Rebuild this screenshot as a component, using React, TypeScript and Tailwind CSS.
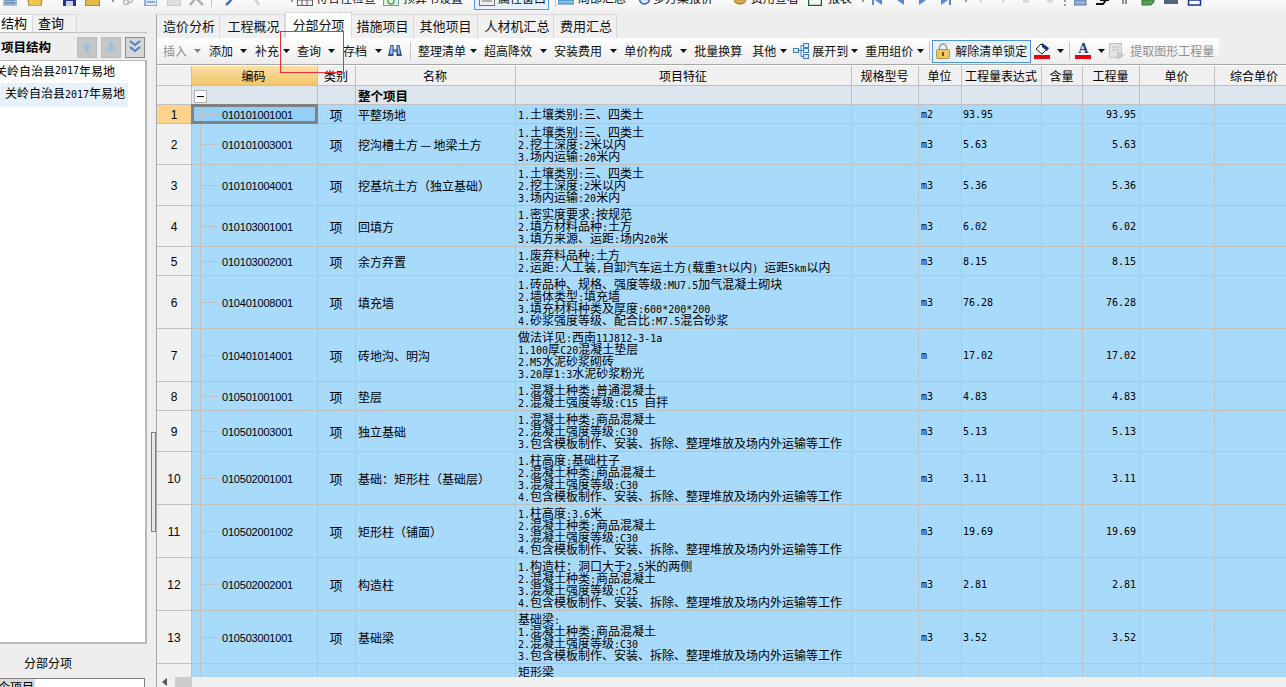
import React from 'react';

interface BillRow {
  no: number;
  code: string;
  name: string;
  unit: string;
  qty: string;
  lines: string[];
}

const concrete = (a: string, grade: string) => [a, '2.混凝土种类:商品混凝土', `3.混凝土强度等级:${grade}`, '4.包含模板制作、安装、拆除、整理堆放及场内外运输等工作'];
const soil = ['1.土壤类别:三、四类土', '2.挖土深度:2米以内', '3.场内运输:20米内'];

const rows: BillRow[] = [
  { no: 1, code: '010101001001', name: '平整场地', unit: 'm2', qty: '93.95', lines: ['1.土壤类别:三、四类土'] },
  { no: 2, code: '010101003001', name: '挖沟槽土方\u2009—\u2009地梁土方', unit: 'm3', qty: '5.63', lines: soil },
  { no: 3, code: '010101004001', name: '挖基坑土方（独立基础）', unit: 'm3', qty: '5.36', lines: soil },
  { no: 4, code: '010103001001', name: '回填方', unit: 'm3', qty: '6.02', lines: ['1.密实度要求:按规范', '2.填方材料品种:土方', '3.填方来源、运距:场内20米'] },
  { no: 5, code: '010103002001', name: '余方弃置', unit: 'm3', qty: '8.15', lines: ['1.废弃料品种:土方', '2.运距:人工装,自卸汽车运土方(载重3t以内) 运距5km以内'] },
  { no: 6, code: '010401008001', name: '填充墙', unit: 'm3', qty: '76.28', lines: ['1.砖品种、规格、强度等级:MU7.5加气混凝土砌块', '2.墙体类型:填充墙', '3.填充材料种类及厚度:600*200*200', '4.砂浆强度等级、配合比:M7.5混合砂浆'] },
  { no: 7, code: '010401014001', name: '砖地沟、明沟', unit: 'm', qty: '17.02', lines: ['做法详见:西南11J812-3-1a', '1.100厚C20混凝土垫层', '2.M5水泥砂浆砌砖', '3.20厚1:3水泥砂浆粉光'] },
  { no: 8, code: '010501001001', name: '垫层', unit: 'm3', qty: '4.83', lines: ['1.混凝土种类:普通混凝土', '2.混凝土强度等级:C15 自拌'] },
  { no: 9, code: '010501003001', name: '独立基础', unit: 'm3', qty: '5.13', lines: ['1.混凝土种类:商品混凝土', '2.混凝土强度等级:C30', '3.包含模板制作、安装、拆除、整理堆放及场内外运输等工作'] },
  { no: 10, code: '010502001001', name: '基础：矩形柱（基础层）', unit: 'm3', qty: '3.11', lines: concrete('1.柱高度:基础柱子', 'C30') },
  { no: 11, code: '010502001002', name: '矩形柱（铺面）', unit: 'm3', qty: '19.69', lines: concrete('1.柱高度:3.6米', 'C30') },
  { no: 12, code: '010502002001', name: '构造柱', unit: 'm3', qty: '2.81', lines: concrete('1.构造柱：洞口大于2.5米的两侧', 'C25') },
  { no: 13, code: '010503001001', name: '基础梁', unit: 'm3', qty: '3.52', lines: ['基础梁:', '1.混凝土种类:商品混凝土', '2.混凝土强度等级:C30', '3.包含模板制作、安装、拆除、整理堆放及场内外运输等工作'] },
];

const headers = ['编码', '类别', '名称', '项目特征', '规格型号', '单位', '工程量表达式', '含量', '工程量', '单价', '综合单价'];

// ascii runs use a 10px mono so they sit at half the width of a 12px CJK glyph
const Mixed: React.FC<{ text: string }> = ({ text }) => (
  <>
    {text.split(/([\x20-\x7e]+)/).map((part, i) =>
      /^[\x20-\x7e]+$/.test(part) ? (
        <span key={i} className="font-['DejaVu_Sans_Mono',monospace] text-[10px] whitespace-pre">{part}</span>
      ) : (
        <span key={i}>{part}</span>
      )
    )}
  </>
);

const Caret: React.FC<{ className: string; muted?: boolean }> = ({ className, muted }) => (
  <svg width="7" height="4" viewBox="0 0 7 4" className={`shrink-0 ${className}`}>
    <path d="M0 0h7L3.5 4z" fill={muted ? '#808080' : '#111'} />
  </svg>
);

const Sep: React.FC<{ className: string }> = ({ className }) => <div className={`w-px h-[18px] bg-[#c4c4c4] shrink-0 ${className}`} />;

const Tool: React.FC<{ className: string; label: string; muted?: boolean }> = ({ className, label, muted }) => (
  <span className={`shrink-0 whitespace-nowrap ${muted ? 'text-[#8e8e8e]' : 'text-[#111]'} ${className}`}>{label}</span>
);

const Binoculars = () => (
  <svg width="16" height="16" viewBox="0 0 16 16" className="ml-[5px] shrink-0">
    <path d="M3.5 2h3v4h3V2h3l2.500 11H9.500V9h-3v4H1z" fill="#27518f" />
    <path d="M4 3h1.500v8H3zM10.500 3H12l1 8h-2z" fill="#9cc3ee" />
    <rect x="6.500" y="6.500" width="3" height="2" fill="#7ea6d8" />
  </svg>
);

const TreeIcon = () => (
  <svg width="16" height="16" viewBox="0 0 16 16" className="ml-[6px] shrink-0" fill="#d9e8fa" stroke="#3f7fc4">
    <rect x="0.500" y="5.500" width="5" height="4" />
    <rect x="10.500" y="0.500" width="5" height="4" />
    <rect x="10.500" y="5.500" width="5" height="4" />
    <rect x="10.500" y="11.500" width="5" height="4" />
    <path d="M5.500 7.500h5M8 2.500v11M8 2.500h2.500M8 13.500h2.500" fill="none" />
  </svg>
);

const LockIcon = () => (
  <svg width="14" height="16" viewBox="0 0 14 16" className="ml-[3px] shrink-0">
    <path d="M3.500 7V4.500a3.500 3.500 0 0 1 7 0V7" fill="none" stroke="#9a9a9a" strokeWidth="1.500" />
    <rect x="0.500" y="6.500" width="13" height="9" rx="1" fill="#ecc766" stroke="#b39344" />
    <rect x="6" y="9" width="2" height="4" fill="#6b5212" />
  </svg>
);

const PaintIcon = () => (
  <div className="ml-[3px] w-4 shrink-0 flex flex-col items-center">
    <svg width="15" height="12" viewBox="0 0 15 12">
      <path d="M6 1l6 5-5 5-6-5z" fill="#fff" stroke="#222" />
      <path d="M7 0l7 5-2 3-5-4z" fill="#17357f" />
    </svg>
    <div className="w-4 h-1 bg-[#e8000f]" />
  </div>
);

const FontColorIcon = () => (
  <div className="ml-[5px] w-4 shrink-0 flex flex-col items-center">
    <span className="h-3 leading-3 text-[14px] font-bold text-[#1f3f8f] font-['Liberation_Serif',serif]">A</span>
    <div className="w-4 h-1 bg-[#e8000f]" />
  </div>
);

const ExtractIcon = () => (
  <svg width="17" height="17" viewBox="0 0 17 17" className="ml-1 shrink-0">
    <rect x="0.500" y="0.500" width="12" height="14" fill="#e2e2e2" stroke="#c2c2c2" />
    <path d="M3 4h7M3 7h7" stroke="#c2c2c2" />
    <path d="M8 8l8 4-8 5z" fill="#c8c8c8" />
  </svg>
);

// the top toolbar is cut off by the window edge, only the lower part of it shows
const TopBar = () => (
  <div className="h-[14px] overflow-hidden bg-gradient-to-b from-[#fafafa] to-[#eeeeee] shrink-0">
    <div className="h-6 -mt-[14px] flex items-center text-[12px] text-[#111] whitespace-nowrap">
      <svg width="14" height="16" viewBox="0 0 14 16" className="ml-[3px] shrink-0"><rect width="14" height="16" fill="#9db9dc" /><path d="M2 10h10M2 13h10" stroke="#4a6f9f" /></svg>
      <svg width="16" height="16" viewBox="0 0 16 16" className="ml-[10px] shrink-0"><path d="M0 4h16l-2 12H2z" fill="#f2c552" stroke="#a8832c" /></svg>
      <svg width="13" height="16" viewBox="0 0 13 16" className="ml-5 shrink-0"><rect width="13" height="16" fill="#25358f" /><rect x="3" y="11" width="7" height="5" fill="#c9d4ef" /></svg>
      <svg width="15" height="16" viewBox="0 0 15 16" className="ml-[9px] shrink-0"><rect width="15" height="16" fill="#e5b84a" stroke="#7a6328" /></svg>
      <div className="ml-[12px] w-0.5 h-2 border-l-2 border-dotted border-[#999] shrink-0" />
      <svg width="10" height="16" viewBox="0 0 10 16" className="ml-[9px] shrink-0"><circle cx="3" cy="12" r="2.500" fill="none" stroke="#b8b8b8" strokeWidth="1.500" /><circle cx="7" cy="10" r="2.500" fill="none" stroke="#b8b8b8" strokeWidth="1.500" /></svg>
      <svg width="15" height="16" viewBox="0 0 15 16" className="ml-[9px] shrink-0"><rect x="3" width="12" height="16" fill="#dbe9fb" stroke="#2d6fc2" /><path d="M5 9h8M5 12h8" stroke="#2d6fc2" /></svg>
      <svg width="14" height="16" viewBox="0 0 14 16" className="ml-[10px] shrink-0"><rect width="14" height="16" fill="#e0e0e0" stroke="#b5b5b5" /></svg>
      <svg width="15" height="16" viewBox="0 0 15 16" className="ml-2 shrink-0"><path d="M1 15L7 8l7 7M7 8" fill="none" stroke="#b0b0b0" strokeWidth="2.500" /></svg>
      <Sep className="ml-[7px]" />
      <svg width="8" height="16" viewBox="0 0 8 16" className="ml-[13px] shrink-0"><path d="M1 15C3 13 6 11 7 8" fill="none" stroke="#3c70c8" strokeWidth="2.500" /></svg>
      <svg width="6" height="16" viewBox="0 0 6 16" className="ml-[21px] shrink-0"><path d="M1 9l4 6" stroke="#d0d0d0" strokeWidth="2.500" /></svg>
      <div className="ml-[31px] w-0.5 h-2 border-l-2 border-dotted border-[#999] shrink-0" />
      <svg width="16" height="16" viewBox="0 0 16 16" className="ml-[4px] shrink-0"><rect x="0.500" y="0.500" width="15" height="15" fill="#f2f2f2" stroke="#606060" /><path d="M0 10h16M5 8v8M10 8v8" stroke="#606060" /></svg>
      <span className="ml-[3px] w-[62px] shrink-0">符合性检查</span>
      <svg width="16" height="16" viewBox="0 0 16 16" className="ml-[5px] shrink-0"><rect x="0.500" y="0.500" width="15" height="15" fill="#e2f2e2" stroke="#6a9ac6" /><circle cx="8" cy="11" r="3" fill="none" stroke="#5aaa5a" strokeWidth="1.500" /></svg>
      <span className="ml-1 w-[62px] shrink-0">预算书设置</span>
      <div className="ml-[9px] w-[75px] h-full shrink-0 flex items-center border border-[#4f96dc] bg-[#e6f1fb]">
        <svg width="16" height="16" viewBox="0 0 16 16" className="ml-[4px] shrink-0"><rect x="0.500" y="0.500" width="15" height="15" fill="#efefef" stroke="#707070" /><path d="M3 8h10M3 11h10" stroke="#707070" /></svg>
        <span className="ml-[3px]">属性窗口</span>
      </div>
      <Sep className="ml-[6px]" />
      <svg width="16" height="16" viewBox="0 0 16 16" className="ml-[2px] shrink-0"><rect y="10" width="16" height="4" fill="#7cc4ee" stroke="#3a7fb8" /></svg>
      <span className="ml-1 w-12 shrink-0">局部汇总</span>
      <svg width="13" height="16" viewBox="0 0 13 16" className="ml-3 shrink-0"><circle cx="6.500" cy="9" r="5" fill="#dce8fa" stroke="#2c62c4" strokeWidth="1.500" /></svg>
      <span className="ml-[2px] w-[60px] shrink-0">多方案报价</span>
      <svg width="12" height="16" viewBox="0 0 12 16" className="ml-[21px] shrink-0"><ellipse cx="6" cy="10" rx="6" ry="4" fill="#d8a84a" stroke="#8c6a24" /></svg>
      <span className="ml-[5px] w-12 shrink-0">费用查看</span>
      <svg width="14" height="16" viewBox="0 0 14 16" className="ml-[9px] shrink-0"><rect x="0.500" y="0.500" width="13" height="15" fill="#f4f8f4" stroke="#225a3a" strokeWidth="1.500" /></svg>
      <span className="ml-[6px] w-6 shrink-0">报表</span>
      <div className="ml-[10px] w-0.5 h-2 border-l-2 border-dotted border-[#999] shrink-0" />
      <svg width="10" height="16" viewBox="0 0 10 16" className="ml-[8px] shrink-0"><path d="M0 4h2v11H0zM10 4v11L3 10z" fill="#5b86d6" /></svg>
      <svg width="7" height="16" viewBox="0 0 7 16" className="ml-[15px] shrink-0"><path d="M7 4v11L0 10z" fill="#5b86d6" /></svg>
      <svg width="7" height="16" viewBox="0 0 7 16" className="ml-[15px] shrink-0"><path d="M0 4v11l7-5z" fill="#5b86d6" /></svg>
      <svg width="10" height="16" viewBox="0 0 10 16" className="ml-[15px] shrink-0"><path d="M8 4h2v11H8zM0 4v11l7-5z" fill="#5b86d6" /></svg>
      <div className="ml-[14px] w-0.5 h-2 border-l-2 border-dotted border-[#999] shrink-0" />
      <svg width="90" height="16" viewBox="0 0 90 16" className="ml-[6px] shrink-0">
        <path d="M4 9l5 5V4zM29 4l5 5-5 5zM50 8h6v5h-6zM72 9h10l-5 5z" fill="#d9d9d9" />
      </svg>
    </div>
  </div>
);

const TopBarRight = () => (
  <div className="absolute left-[1064px] top-0 flex items-start h-[6px] overflow-hidden">
    <div className="w-0.5 h-[6px] border-l-2 border-dotted border-[#999] mr-2" />
    <svg width="130" height="6" viewBox="0 0 130 6">
      <rect x="0" y="0" width="12" height="5" fill="#92add6" stroke="#5a78a6" />
      <path d="M22 4h7l3-4h3M26 0h7" stroke="#111" strokeWidth="2" fill="none" />
      <path d="M49 0v4M52 0v4" stroke="#222" />
      <path d="M68 0h12v2l-3 3H68z" fill="#55a255" stroke="#366c36" />
      <rect x="90" y="0" width="14" height="4" fill="#556677" />
      <rect x="114.500" y="0" width="12" height="5" fill="#fff" stroke="#1a2f9a" strokeWidth="1.500" />
    </svg>
  </div>
);

const tabs = [
  { label: '造价分析', w: 'w-[62px]', pad: 'pl-px' },
  { label: '工程概况', w: 'w-[65px]', pad: 'pl-[3px]' },
  { label: '分部分项', w: 'w-[67px]', pad: '', active: true },
  { label: '措施项目', w: 'w-[62px]', pad: '' },
  { label: '其他项目', w: 'w-[64px]', pad: '' },
  { label: '人材机汇总', w: 'w-[76px]', pad: 'pl-[3px]' },
  { label: '费用汇总', w: 'w-[63px]', pad: 'pl-[2px]' },
];

const TabStrip = () => (
  <div className="h-6 pl-px flex shrink-0">
    {tabs.map((t) => (
      <div
        key={t.label}
        className={`${t.w} ${t.pad} pb-[2px] flex items-center justify-center text-[13px] text-[#111] border-t border-r border-[#d8d8d8] ${t.active ? 'bg-white -mt-[2px] border-l' : 'bg-[#f0f0f0]'}`}
      >
        {t.label}
      </div>
    ))}
  </div>
);

const ToolStrip = () => (
  <div className="h-[26px] shrink-0 flex">
    <div className="w-[1062px] h-full flex items-center text-[12px] bg-gradient-to-b from-white to-[#ececec]">
      <Tool className="ml-[6px]" label="插入" muted />
      <Caret className="ml-[7px]" muted />
      <Tool className="ml-2" label="添加" />
      <Caret className="ml-[7px]" />
      <Tool className="ml-2" label="补充" />
      <Caret className="ml-1" />
      <Tool className="ml-[7px]" label="查询" />
      <Caret className="ml-[7px]" />
      <Tool className="ml-2" label="存档" />
      <Caret className="ml-2" />
      <Binoculars />
      <Sep className="ml-[7px]" />
      <Tool className="ml-[7px]" label="整理清单" />
      <Caret className="ml-1" />
      <Tool className="ml-[7px]" label="超高降效" />
      <Caret className="ml-2" />
      <Tool className="ml-[7px]" label="安装费用" />
      <Caret className="ml-2" />
      <Tool className="ml-[7px]" label="单价构成" />
      <Caret className="ml-2" />
      <Tool className="ml-[7px]" label="批量换算" />
      <Tool className="ml-[10px]" label="其他" />
      <Caret className="ml-1" />
      <TreeIcon />
      <Tool className="ml-[3px]" label="展开到" />
      <Caret className="ml-[3px]" />
      <Tool className="ml-[7px]" label="重用组价" />
      <Caret className="ml-1" />
      <Sep className="ml-[5px]" />
      <div className="ml-[2px] w-[99px] h-[23px] shrink-0 flex items-center border border-[#4f96dc] bg-[#e6f1fb]">
        <LockIcon />
        <span className="ml-[5px] whitespace-nowrap text-[#111]">解除清单锁定</span>
      </div>
      <PaintIcon />
      <Caret className="ml-[7px]" />
      <Sep className="ml-[5px]" />
      <FontColorIcon />
      <Caret className="ml-[7px]" />
      <ExtractIcon />
      <Tool className="ml-1" label="提取图形工程量" muted />
    </div>
  </div>
);

const Cell: React.FC<{ className?: string; children?: React.ReactNode }> = ({ className = '', children }) => (
  <td className={`border-r border-b border-[#c0c0c0] p-0 pt-[2px] h-[19px] leading-4 align-middle ${className}`}>{children}</td>
);

const BillTable = () => (
  <table className="table-fixed border-separate border-spacing-0 w-[1138px] text-[12px] text-black">
    <colgroup>
      <col className="w-[35px]" />
      <col className="w-[126px]" />
      <col className="w-[38px]" />
      <col className="w-[160px]" />
      <col className="w-[336px]" />
      <col className="w-[67px]" />
      <col className="w-[43px]" />
      <col className="w-[80px]" />
      <col className="w-[41px]" />
      <col className="w-[57px]" />
      <col className="w-[75px]" />
      <col className="w-[80px]" />
    </colgroup>
    <thead>
      <tr>
        <th className="border-r border-b border-[#c0c0c0] h-5 bg-[#f0f0f0] p-0" />
        {headers.map((h, i) => (
          <th
            key={h}
            className={`border-r border-b border-[#c0c0c0] p-0 font-normal text-center whitespace-nowrap ${i === 0 ? 'pr-[2px] bg-gradient-to-b from-[#fbe0a6] to-[#f3c568]' : 'pr-px bg-[#f0f0f0]'}`}
          >
            {h}
          </th>
        ))}
      </tr>
    </thead>
    <tbody>
      <tr className="bg-[#dde5ef]">
        <Cell className="bg-[#f0f0f0]" />
        <Cell>
          <div className="ml-[2px] mt-px w-[13px] h-[13px] bg-white border border-[#b0b0b0] flex items-center justify-center">
            <div className="w-[7px] h-px bg-black" />
          </div>
        </Cell>
        <Cell />
        <Cell className="font-bold pl-[2px] text-[12.500px]">整个项目</Cell>
        <Cell />
        <Cell />
        <Cell />
        <Cell />
        <Cell />
        <Cell />
        <Cell />
        <Cell />
      </tr>
      {rows.map((r) => (
        <tr key={r.no} className="bg-[#a8dafb]">
          <Cell className={`text-center font-['Liberation_Sans',sans-serif] ${r.no === 1 ? 'bg-[#fdd28a]' : 'bg-[#f0f0f0]'}`}>{r.no}</Cell>
          <Cell className={`relative pl-[6px] text-center font-['Liberation_Sans',sans-serif] text-[11px] tracking-[-0.2px] ${r.no === 1 ? 'bg-[#93cff7]' : ''}`}>
            <span className="absolute left-[8px] top-0 bottom-0 w-px bg-[#c0c0c0]" />
            <span className="absolute left-[9px] top-1/2 w-4 h-px bg-[#c0c0c0]" />
            {r.no === 1 && <span className="absolute -left-px -right-px -top-px -bottom-px border-[3px] border-[#808080]" />}
            {r.code}
          </Cell>
          <Cell className="text-center text-[13px] pr-px">项</Cell>
          <Cell className="pl-[2px] whitespace-nowrap">{r.name}</Cell>
          <Cell className="pl-[2px] pb-[2px] whitespace-nowrap">
            {r.lines.map((l, i) => (
              <div key={i} className="h-3 leading-3">
                <Mixed text={l} />
              </div>
            ))}
          </Cell>
          <Cell />
          <Cell className="pl-[2px] font-['DejaVu_Sans_Mono',monospace] text-[10px]">{r.unit}</Cell>
          <Cell className="pl-px font-['DejaVu_Sans_Mono',monospace] text-[10px]">{r.qty}</Cell>
          <Cell />
          <Cell className="pr-[3px] text-right font-['DejaVu_Sans_Mono',monospace] text-[10px]">{r.qty}</Cell>
          <Cell />
          <Cell />
        </tr>
      ))}
      <tr className="bg-[#a8dafb]">
        <Cell className="bg-[#f0f0f0]" />
        <Cell className="relative"><span className="absolute left-[8px] top-0 bottom-0 w-px bg-[#c0c0c0]" /></Cell>
        <Cell />
        <Cell />
        <Cell className="pl-[2px] pb-[2px] whitespace-nowrap align-top"><div className="h-3 leading-3">矩形梁</div><div className="h-3" /></Cell>
        <Cell />
        <Cell />
        <Cell />
        <Cell />
        <Cell />
        <Cell />
        <Cell />
      </tr>
    </tbody>
  </table>
);

const LeftPanel = () => (
  <div className="w-[147px] h-full shrink-0 flex flex-col text-[12px] text-black">
    <div className="h-[18px] flex shrink-0">
      <div className="w-[33px] bg-white border-t border-r border-[#d8d8d8] text-[13px] leading-4 whitespace-nowrap overflow-hidden pl-px">结构</div>
      <div className="w-[44px] bg-[#f0f0f0] border-t border-r border-[#d8d8d8] text-[13px] leading-4 pl-[5px]">查询</div>
    </div>
    <div className="h-7 shrink-0 flex items-center pt-px border-t border-[#c0c0c0]">
      <span className="ml-px font-bold text-[12.500px] w-[76px] whitespace-nowrap">项目结构</span>
      <button className="w-5 h-[21px] bg-[#c6c6c6] border border-[#bdbdbd] flex items-center justify-center">
        <svg width="10" height="10" viewBox="0 0 10 10"><path d="M5 0l5 5H7v5H3V5H0z" fill="#9ebfdc" /></svg>
      </button>
      <button className="ml-1 w-5 h-[21px] bg-[#c6c6c6] border border-[#bdbdbd] flex items-center justify-center">
        <svg width="10" height="10" viewBox="0 0 10 10"><path d="M5 10l5-5H7V0H3v5H0z" fill="#9ebfdc" /></svg>
      </button>
      <button className="ml-1 w-5 h-[21px] bg-[#d6d6d6] border border-[#8a8a8a] flex items-center justify-center">
        <svg width="14" height="14" viewBox="0 0 14 14" fill="none" stroke="#4d82c4" strokeWidth="2"><path d="M2 1l5 4 5-4M2 7l5 4 5-4" /></svg>
      </button>
    </div>
    <div className="h-[584px] shrink-0 bg-white border-t border-r-2 border-b-2 border-[#b8b8b8] overflow-hidden">
      <div className="h-[22px] pb-[3px] flex items-center -ml-[5px] whitespace-nowrap"><Mixed text="关岭自治县2017年易地" /></div>
      <div className="w-[128px] h-6 pb-1 flex items-center pl-[5px] whitespace-nowrap bg-[#e6f1fc]"><span><Mixed text="关岭自治县2017年易地" /></span></div>
    </div>
    <div className="h-[34px] shrink-0 flex items-center justify-center pt-1 w-[96px]">分部分项</div>
    <div className="flex-1 w-[145px] bg-white border-t border-r border-[#808080] overflow-hidden">
      <div className="w-[35px] h-[10px] bg-[#d9d9d9] overflow-hidden whitespace-nowrap leading-[16px]"><span className="-ml-[14px] inline-block">整个项目</span></div>
    </div>
  </div>
);

const Splitter = () => (
  <div className="w-[10px] shrink-0 h-full flex items-center border-r border-[#a8a8a8]">
    <div className="ml-1 mt-[263px] w-[5px] h-[100px] border border-[#808080] bg-[#e8e8e8]" />
  </div>
);

export default function App() {
  return (
    <div className="relative w-[1286px] h-[687px] overflow-hidden bg-[#eeeeee] font-['Noto_Sans_CJK_SC','Liberation_Sans',sans-serif] flex flex-col">
      <TopBar />
      <TopBarRight />
      <div className="flex-1 min-h-0 flex">
        <LeftPanel />
        <Splitter />
        <div className="flex-1 min-w-0 flex flex-col">
          <TabStrip />
          <ToolStrip />
          <div className="h-[613px] shrink-0 border-t border-[#a8a8a8] pt-px overflow-hidden bg-white">
            <BillTable />
          </div>
        </div>
      </div>
      {/* red annotation box drawn over the screenshot */}
      <div className="absolute left-[280px] top-[31px] w-[64px] h-[42px] border border-[#f03030] pointer-events-none" />
      {/* horizontal scrollbar */}
      <div className="absolute left-[157px] right-0 top-[677px] h-[10px] bg-[#f0f0f0] flex items-center">
        <svg width="6" height="8" viewBox="0 0 6 8" className="ml-[5px]"><path d="M5 0v8L0 4z" fill="#555" /></svg>
        <div className="ml-[7px] w-[17px] h-full bg-[#cdcdcd]" />
      </div>
    </div>
  );
}
